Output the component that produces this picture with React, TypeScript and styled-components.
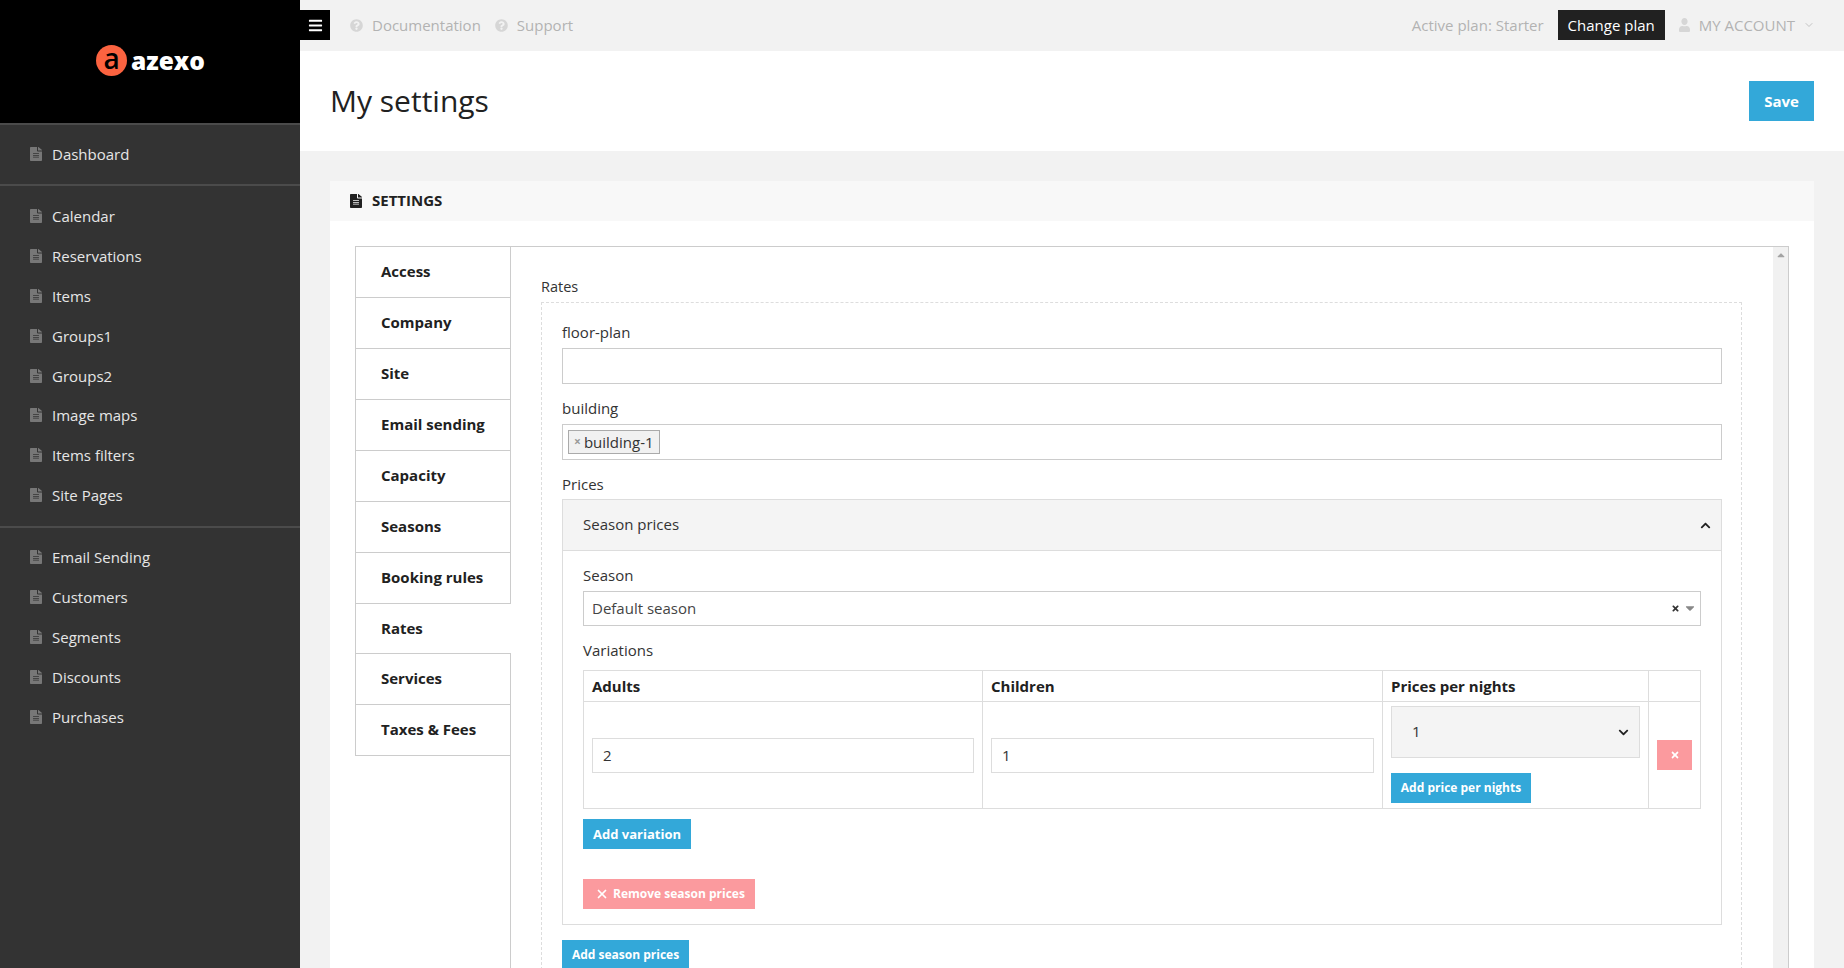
import React from 'react';
import styled, { createGlobalStyle } from 'styled-components';
import { FaBars, FaCaretDown, FaCaretUp, FaChevronDown, FaChevronUp, FaFileAlt, FaQuestionCircle, FaTimes, FaUser } from 'react-icons/fa';
import { FiChevronDown, FiX } from 'react-icons/fi';

const GlobalStyle = createGlobalStyle`
  html, body {
    margin: 0;
    padding: 0;
    height: 100%;
    overflow: hidden;
  }
  body {
    font-family: "Open Sans", "Liberation Sans", sans-serif;
    font-size: 15px;
    line-height: 20px;
    color: #333;
  }
  * {
    box-sizing: border-box;
  }
`;

const navGroups = [
  ['Dashboard'],
  ['Calendar', 'Reservations', 'Items', 'Groups1', 'Groups2', 'Image maps', 'Items filters', 'Site Pages'],
  ['Email Sending', 'Customers', 'Segments', 'Discounts', 'Purchases'],
];

const tabs = ['Access', 'Company', 'Site', 'Email sending', 'Capacity', 'Seasons', 'Booking rules', 'Rates', 'Services', 'Taxes & Fees'];

const App: React.FC = () => {
  return (
    <Page>
      <GlobalStyle />
      <Sidebar>
        <LogoBlock>
          <LogoMark>a</LogoMark>
          <LogoText>azexo</LogoText>
        </LogoBlock>
        {navGroups.map((group) => (
          <NavGroup key={group[0]}>
            {group.map((item) => (
              <NavItem key={item}>
                <FaFileAlt preserveAspectRatio="none" />
                {item}
              </NavItem>
            ))}
          </NavGroup>
        ))}
      </Sidebar>
      <Main>
        <TopBar>
          <Burger>
            <FaBars />
          </Burger>
          <TopLink>
            <FaQuestionCircle />
            Documentation
          </TopLink>
          <TopLink>
            <FaQuestionCircle />
            Support
          </TopLink>
          <TopRight>
            <PlanText>Active plan: Starter</PlanText>
            <ChangePlan>Change plan</ChangePlan>
            <Account>
              <FaUser preserveAspectRatio="none" />
              MY ACCOUNT
              <FiChevronDown />
            </Account>
          </TopRight>
        </TopBar>
        <PageHeader>
          <Title>My settings</Title>
          <SaveButton>Save</SaveButton>
        </PageHeader>
        <Content>
          <Card>
            <CardHeader>
              <FaFileAlt preserveAspectRatio="none" />
              SETTINGS
            </CardHeader>
            <CardBody>
              <TabList>
                {tabs.map((tab) => (
                  <Tab key={tab} $active={tab === 'Rates'}>
                    {tab}
                  </Tab>
                ))}
              </TabList>
              <Pane>
                <PaneBody>
                  <RatesLabel>Rates</RatesLabel>
                  <DashedBox>
                    <Label>floor-plan</Label>
                    <TagField />
                    <Label $top={14}>building</Label>
                    <TagField>
                      <Tag>
                        <TagClose>×</TagClose>
                        building-1
                      </Tag>
                    </TagField>
                    <PricesLabel>Prices</PricesLabel>
                    <PricesPanel>
                      <PanelHeader>
                        Season prices
                        <FaChevronUp />
                      </PanelHeader>
                      <PanelBody>
                        <SeasonLabel>Season</SeasonLabel>
                        <SeasonSelect>
                          Default season
                          <SelectIcons>
                            <FaTimes />
                            <FaCaretDown />
                          </SelectIcons>
                        </SeasonSelect>
                        <VariationsLabel>Variations</VariationsLabel>
                        <VariationsTable>
                          <colgroup>
                            <col width={399} />
                            <col width={400} />
                            <col width={266} />
                            <col width={52} />
                          </colgroup>
                          <thead>
                            <tr>
                              <HeadCell>Adults</HeadCell>
                              <HeadCell>Children</HeadCell>
                              <HeadCell>Prices per nights</HeadCell>
                              <HeadCell />
                            </tr>
                          </thead>
                          <tbody>
                            <tr>
                              <BodyCell>
                                <NumberInput defaultValue="2" />
                              </BodyCell>
                              <BodyCell>
                                <NumberInput defaultValue="1" />
                              </BodyCell>
                              <PricesCell>
                                <NightsSelect>
                                  1
                                  <FaChevronDown />
                                </NightsSelect>
                                <SmallButton>Add price per nights</SmallButton>
                              </PricesCell>
                              <DeleteCell>
                                <DeleteButton>
                                  <FaTimes />
                                </DeleteButton>
                              </DeleteCell>
                            </tr>
                          </tbody>
                        </VariationsTable>
                        <AddVariation>Add variation</AddVariation>
                        <RemoveButton>
                          <FiX />
                          Remove season prices
                        </RemoveButton>
                      </PanelBody>
                    </PricesPanel>
                    <AddSeason>Add season prices</AddSeason>
                  </DashedBox>
                </PaneBody>
                <ScrollTrack>
                  <FaCaretUp />
                </ScrollTrack>
              </Pane>
            </CardBody>
          </Card>
        </Content>
      </Main>
    </Page>
  );
};

export default App;

const Page = styled.div`
  display: flex;
  width: 100%;
  height: 968px;
  overflow: hidden;
`;

// Sidebar
const Sidebar = styled.aside`
  width: 300px;
  flex: none;
  background: #333;
`;
const LogoBlock = styled.div`
  height: 123px;
  background: #000;
  display: flex;
  align-items: center;
  padding: 0 0 2px 96px;
`;
const LogoMark = styled.span`
  width: 31px;
  height: 31px;
  border-radius: 50%;
  background: #fb6340;
  color: #000;
  font-size: 28px;
  line-height: 27px;
  font-weight: 600;
  text-align: center;
`;
const LogoText = styled.span`
  margin-left: 4px;
  color: #fff;
  font-size: 24.5px;
  line-height: 31px;
  font-weight: 800;
`;
const NavGroup = styled.nav`
  border-top: 2px solid #4b4b4b;
  padding: 10.2px 0 11px;
  &:first-of-type {
    padding: 9px 0 10px;
  }
  &:last-of-type {
    padding-top: 9px;
  }
`;
const NavItem = styled.div`
  height: 39.9px;
  display: flex;
  align-items: center;
  padding-left: 30px;
  color: #e6e6e6;
  font-size: 15px;
  svg {
    width: 12px;
    height: 14px;
    margin-right: 10px;
    color: #777;
  }
`;

// Top bar
const Main = styled.main`
  flex: 1;
  min-width: 0;
  display: flex;
  flex-direction: column;
`;
const TopBar = styled.header`
  height: 51px;
  flex: none;
  background: #f2f2f2;
  display: flex;
  align-items: flex-start;
  padding-top: 10px;
`;
const Burger = styled.div`
  width: 30px;
  height: 30px;
  background: #000;
  color: #fff;
  display: flex;
  align-items: center;
  justify-content: center;
  margin-right: 20px;
  svg {
    width: 15px;
    height: 15px;
  }
`;
const TopLink = styled.div`
  height: 30px;
  display: flex;
  align-items: center;
  color: #b3b3b3;
  margin-right: 14px;
  svg {
    width: 13px;
    height: 13px;
    margin-right: 9px;
    color: #d6d6d6;
  }
`;
const TopRight = styled.div`
  margin-left: auto;
  height: 30px;
  display: flex;
  align-items: center;
  padding-right: 29px;
`;
const PlanText = styled.span`
  color: #b3b3b3;
  margin-right: 14px;
`;
const ChangePlan = styled.button`
  height: 30px;
  width: 107px;
  border: 0;
  padding: 0;
  background: #212121;
  color: #fff;
  font: inherit;
  margin-right: 14px;
`;
const Account = styled.div`
  display: flex;
  align-items: center;
  color: #b3b3b3;
  svg:first-child {
    width: 11px;
    height: 14px;
    margin-right: 9px;
    color: #d6d6d6;
  }
  svg:last-child {
    width: 12px;
    height: 12px;
    margin-left: 8px;
    color: #c4c4c4;
  }
`;

// Page header
const PageHeader = styled.div`
  height: 100px;
  flex: none;
  background: #fff;
  display: flex;
  align-items: center;
  justify-content: space-between;
  padding: 0 30px;
`;
const Title = styled.h1`
  margin: 0;
  font-size: 30px;
  line-height: 40px;
  font-weight: 400;
  color: #212121;
`;
const SolidButton = styled.button`
  display: block;
  border: 0;
  padding: 0;
  height: 30px;
  background: #33a8d9;
  color: #fff;
  font-family: inherit;
  font-size: 12px;
  font-weight: 700;
  text-align: center;
`;
const SaveButton = styled(SolidButton)`
  width: 65px;
  height: 40px;
  font-size: 15px;
`;

// Settings card
const Content = styled.div`
  flex: 1;
  min-height: 0;
  background: #f2f2f2;
  padding: 30px 30px 0;
`;
const Card = styled.section`
  background: #fff;
`;
const CardHeader = styled.div`
  height: 40px;
  background: #f8f8f8;
  display: flex;
  align-items: center;
  padding: 0 0 2px 20px;
  font-weight: 700;
  font-size: 15px;
  color: #212121;
  svg {
    width: 12px;
    height: 14px;
    margin: 2px 10px 0 0;
  }
`;
const CardBody = styled.div`
  display: flex;
  padding: 25px 25px 0;
`;
const TabList = styled.div`
  width: 155px;
  flex: none;
  border-top: 1px solid #ccc;
  align-self: flex-start;
`;
const Tab = styled.div<{ $active?: boolean }>`
  height: ${(p) => (p.$active ? '50px' : '51px')};
  display: flex;
  align-items: center;
  padding: 0 0 ${(p) => (p.$active ? '1px' : '2px')} 25px;
  border-left: 1px solid #ccc;
  border-bottom: 1px solid #ccc;
  font-weight: 700;
  color: #212121;
  background: #fff;
  position: relative;
  margin-right: ${(p) => (p.$active ? '-1px' : '0')};
`;
const Pane = styled.div`
  flex: 1;
  min-width: 0;
  display: flex;
  border: 1px solid #ccc;
  border-bottom: 0;
`;
const PaneBody = styled.div`
  flex: 1;
  min-width: 0;
  padding: 30px 31px 0 30px;
`;
const RatesLabel = styled.div`
  font-size: 14.5px;
  margin-bottom: 5px;
`;
const ScrollTrack = styled.div`
  width: 15px;
  flex: none;
  background: #f1f1f1;
  color: #a3a3a3;
  display: flex;
  justify-content: center;
  svg {
    width: 12px;
    height: 12px;
    margin-top: 2px;
  }
`;
const DashedBox = styled.div`
  border: 1px dashed #ddd;
  border-bottom: 0;
  padding: 19px 19px 0 20px;
`;
const Label = styled.div<{ $top?: number }>`
  margin-top: ${(p) => p.$top ?? 0}px;
  margin-bottom: 6px;
`;
const PricesLabel = styled.div`
  margin: 14px 0 5px;
`;
const SeasonLabel = styled.div`
  margin-bottom: 6px;
`;
const TagField = styled.div`
  height: 36px;
  border: 1px solid #ccc;
  padding: 5px;
`;
const Tag = styled.span`
  display: inline-flex;
  align-items: center;
  height: 24px;
  border: 1px solid #aaa;
  background: #f1f1f1;
  padding: 0 5px;
`;
const TagClose = styled.span`
  color: #999;
  font-weight: 700;
  font-size: 12px;
  margin-right: 3px;
`;
const PricesPanel = styled.div`
  border: 1px solid #ddd;
`;
const PanelHeader = styled.div`
  height: 51px;
  background: #f4f4f4;
  border-bottom: 1px solid #ddd;
  display: flex;
  align-items: center;
  justify-content: space-between;
  padding: 0 10px 2px 20px;
  svg {
    width: 11px;
    height: 11px;
    margin-top: 2px;
    color: #212121;
  }
`;
const PanelBody = styled.div`
  padding: 14px 20px 15px;
`;
const SeasonSelect = styled.div`
  height: 35px;
  border: 1px solid #ccc;
  display: flex;
  align-items: center;
  justify-content: space-between;
  padding: 0 3px 1px 8px;
  color: #444;
`;
const SelectIcons = styled.div`
  display: flex;
  align-items: center;
  gap: 3px;
  svg:first-child {
    width: 9px;
    height: 9px;
    color: #333;
  }
  svg:last-child {
    width: 14px;
    height: 14px;
    color: #888;
  }
`;
const VariationsLabel = styled.div`
  margin: 14px 0 10px;
`;
const VariationsTable = styled.table`
  width: calc(100% - 1px);
  table-layout: fixed;
  border-collapse: collapse;
`;
const HeadCell = styled.th`
  height: 31px;
  padding: 0 8px;
  border: 1px solid #ddd;
  text-align: left;
  font-weight: 700;
  color: #212121;
`;
const BodyCell = styled.td`
  height: 106px;
  padding: 0 8px;
  border: 1px solid #ddd;
  vertical-align: middle;
`;
const PricesCell = styled(BodyCell)`
  padding: 4px 8px 5px;
  vertical-align: top;
`;
const DeleteCell = styled(BodyCell)`
  padding: 0 8px;
`;
const NumberInput = styled.input`
  display: block;
  width: 100%;
  height: 35px;
  border: 1px solid #ddd;
  outline: 0;
  padding: 0 10px;
  font: inherit;
  color: #333;
`;
const NightsSelect = styled.div`
  height: 52px;
  background: #f4f4f4;
  border: 1px solid #ddd;
  display: flex;
  align-items: center;
  justify-content: space-between;
  padding: 0 10px 2px 20px;
  svg {
    width: 11px;
    height: 11px;
    margin-top: 2px;
    color: #212121;
  }
`;
const SmallButton = styled(SolidButton)`
  width: 140px;
  margin-top: 15px;
  padding-bottom: 2px;
`;
const DeleteButton = styled(SolidButton)`
  width: 35px;
  background: #fb9a9e;
  display: flex;
  align-items: center;
  justify-content: center;
  svg {
    width: 10px;
    height: 10px;
  }
`;
const AddVariation = styled(SolidButton)`
  width: 108px;
  margin-top: 10px;
  font-size: 13px;
`;
const RemoveButton = styled(SolidButton)`
  width: 172px;
  margin-top: 30px;
  padding: 0 0 1px 12px;
  background: #fb9a9e;
  display: flex;
  align-items: center;
  svg {
    width: 14px;
    height: 14px;
    stroke-width: 3;
    margin-right: 4px;
  }
`;
const AddSeason = styled(SolidButton)`
  width: 127px;
  margin-top: 15px;
  padding-bottom: 1px;
`;
